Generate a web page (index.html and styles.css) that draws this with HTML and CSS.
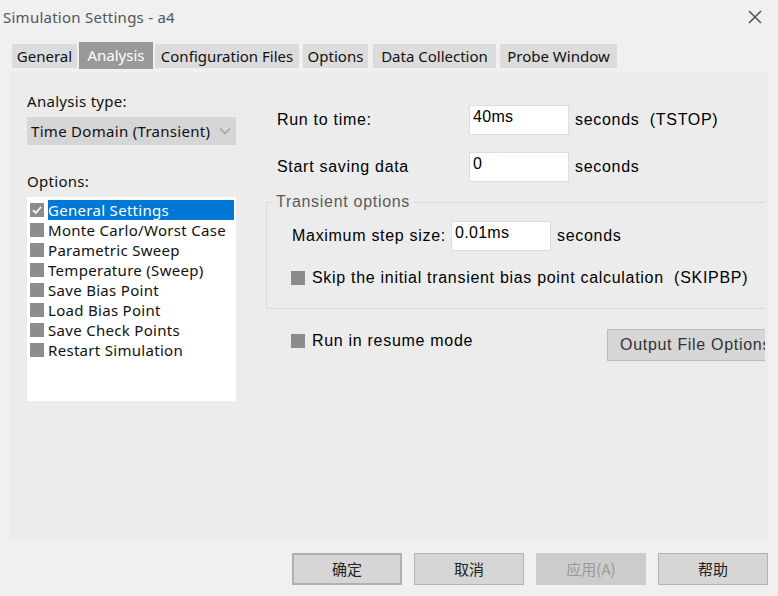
FILE: index.html
```html
<!DOCTYPE html>
<html>
<head>
<meta charset="utf-8">
<link rel="stylesheet" href="styles.css">
</head>
<body>
<div class="window">
  <div class="titlebar">
    <span class="title">Simulation Settings - a4</span>
    <svg class="close" width="14" height="14" viewBox="0 0 14 14"><path d="M1 1L13 13M13 1L1 13" stroke="#555" stroke-width="1.6" fill="none"/></svg>
  </div>
  <div class="tabs">
    <div class="tab t-general">General</div>
    <div class="tab active t-analysis">Analysis</div>
    <div class="tab t-config">Configuration Files</div>
    <div class="tab t-options">Options</div>
    <div class="tab t-data">Data Collection</div>
    <div class="tab t-probe">Probe Window</div>
  </div>
  <div class="panel">
    <div class="leftcol">
      <div class="lbl first">Analysis type:</div>
      <div class="select">
        <span>Time Domain (Transient)</span>
        <svg width="12" height="8" viewBox="0 0 12 8"><path d="M1 1.5L6 6.5L11 1.5" stroke="#a0a0a0" stroke-width="1.3" fill="none"/></svg>
      </div>
      <div class="lbl options">Options:</div>
      <div class="listbox">
        <div class="item sel"><span class="cb checked"><svg width="14" height="14" viewBox="0 0 14 14"><path d="M3 7.2L5.8 10L11 4" stroke="#fff" stroke-width="1.8" fill="none"/></svg></span><span class="itext">General Settings</span></div>
        <div class="item"><span class="cb"></span><span class="itext">Monte Carlo/Worst Case</span></div>
        <div class="item"><span class="cb"></span><span class="itext">Parametric Sweep</span></div>
        <div class="item"><span class="cb"></span><span class="itext">Temperature (Sweep)</span></div>
        <div class="item"><span class="cb"></span><span class="itext">Save Bias Point</span></div>
        <div class="item"><span class="cb"></span><span class="itext">Load Bias Point</span></div>
        <div class="item"><span class="cb"></span><span class="itext">Save Check Points</span></div>
        <div class="item"><span class="cb"></span><span class="itext">Restart Simulation</span></div>
      </div>
    </div>
    <div class="rightcol">
      <div class="row r1">
        <span class="rlabel">Run to time:</span>
        <div class="input">40ms</div>
        <span class="unit">seconds&nbsp; (TSTOP)</span>
      </div>
      <div class="row r2">
        <span class="rlabel">Start saving data</span>
        <div class="input">0</div>
        <span class="unit">seconds</span>
      </div>
      <div class="group">
        <div class="legend">Transient options</div>
        <div class="row r3">
          <span class="rlabel small">Maximum step size:</span>
          <div class="input">0.01ms</div>
          <span class="unit">seconds</span>
        </div>
        <div class="check r4">
          <span class="cb"></span>
          <span>Skip the initial transient bias point calculation&nbsp; (SKIPBP)</span>
        </div>
      </div>
      <div class="resume">
        <div class="check resume-check">
          <span class="cb"></span>
          <span>Run in resume mode</span>
        </div>
        <div class="outbtn">Output File Options</div>
      </div>
    </div>
  </div>
  <div class="footer">
    <div class="btn default">确定</div>
    <div class="btn">取消</div>
    <div class="btn disabled">应用(A)</div>
    <div class="btn">帮助</div>
  </div>
</div>
</body>
</html>
```
FILE: styles.css
```css
html, body {
  margin: 0;
  padding: 0;
  background: #f0f0f0;
}
.window {
  width: 778px;
  height: 596px;
  overflow: hidden;
  font-family: "Noto Sans", "Noto Sans CJK SC", sans-serif;
  font-size: 15px;
  color: #111;
}
.titlebar {
  height: 33px;
  display: flex;
  align-items: center;
  justify-content: space-between;
  padding: 0 16px 1px 3px;
}
.title {
  color: #555;
  font-size: 15px;
  letter-spacing: 0.25px;
}
.close {
  display: block;
}
.tabs {
  display: flex;
  align-items: flex-end;
  height: 36px;
  padding-left: 12px;
}
.tab {
  height: 24px;
  line-height: 25px;
  background: #dcdcdc;
  color: #111;
  margin-bottom: 2px;
  text-align: center;
  font-size: 15px;
}
.tab.active {
  background: #999999;
  color: #fff;
  height: 27px;
  line-height: 26px;
  margin-bottom: 1px;
}
.t-general { width: 65px; margin-right: 2px; }
.t-analysis { width: 74px; margin-right: 2px; }
.t-config { width: 144px; margin-right: 4px; }
.t-options { width: 65px; margin-right: 5px; }
.t-data { width: 123px; margin-right: 4px; }
.t-probe { width: 117px; }
.panel {
  margin: 2px 10px 0 10px;
  height: 468px;
  background: #ececec;
  display: flex;
  overflow: hidden;
}
.leftcol {
  width: 209px;
  padding-left: 17px;
  flex: none;
  letter-spacing: 0.3px;
}
.lbl {
  height: 20px;
  line-height: 20px;
}
.lbl.first {
  margin-top: 19px;
  margin-bottom: 6px;
}
.select {
  height: 28px;
  background: #d6d6d6;
  display: flex;
  align-items: center;
  justify-content: space-between;
  padding: 0 5px 0 4px;
}
.select svg { display: block; }
.lbl.options {
  margin-top: 26px;
  margin-bottom: 6px;
}
.listbox {
  height: 201px;
  background: #fff;
  padding-top: 3px;
}
.item {
  height: 20px;
  display: flex;
  align-items: center;
  line-height: 20px;
}
.item .cb {
  margin-left: 3px;
  margin-right: 4px;
}
.itext {
  padding-left: 0;
  flex: 1;
  margin-right: 2px;
}
.item.sel .itext {
  background: #0078d7;
  color: #fff;
}
.cb {
  width: 14px;
  height: 14px;
  background: #8c8c8c;
  flex: none;
  display: block;
}
.cb svg { display: block; }
.rightcol {
  margin-left: 30px;
  margin-right: 3px;
  flex: 1;
  overflow: hidden;
  font-family: "Liberation Sans", Arial, sans-serif;
  font-size: 16px;
  letter-spacing: 0.7px;
  color: #000;
  -webkit-font-smoothing: none;
}
.row {
  display: flex;
  align-items: center;
  height: 29px;
}
.r1 { margin-top: 33px; padding-left: 11px; }
.r2 { margin-top: 18px; padding-left: 11px; }
.rlabel {
  width: 192px;
  flex: none;
}
.rlabel.small {
  width: 159px;
}
.input {
  background: #fff;
  border: 1px solid #dddddd;
  line-height: 22px;
  padding-left: 3px;
  box-sizing: border-box;
  width: 100px;
  height: 30px;
  flex: none;
  letter-spacing: 0.3px;
}
.unit {
  margin-left: 6px;
}
.group {
  margin-top: 21px;
  height: 107px;
  border-top: 1px solid #d9d9d9;
  border-left: 1px solid #d9d9d9;
  border-bottom: 1px solid #d9d9d9;
  position: relative;
  box-sizing: border-box;
}
.legend {
  position: absolute;
  left: 6px;
  top: -11px;
  background: #ececec;
  padding: 0 3px;
  color: #5a5a5a;
  line-height: 20px;
}
.r3 {
  margin-top: 18px;
  padding-left: 25px;
}
.check {
  display: flex;
  align-items: center;
  gap: 7px;
  height: 20px;
}
.r4 {
  margin-top: 18px;
  padding-left: 24px;
}
.resume {
  display: flex;
  align-items: flex-start;
  margin-top: 22px;
  padding-left: 25px;
  height: 32px;
}
.resume-check {
  width: 316px;
  flex: none;
}
.outbtn {
  margin-top: -2px;
  height: 32px;
  width: 170px;
  flex: none;
  box-sizing: border-box;
  background: #d6d6d6;
  border: 1px solid #bcbcbc;
  color: #333;
  line-height: 30px;
  padding-left: 12px;
  white-space: nowrap;
  letter-spacing: 0.7px;
}
.footer {
  display: flex;
  justify-content: flex-end;
  gap: 12px;
  padding-right: 10px;
  margin-top: 13px;
}
.btn {
  width: 110px;
  height: 32px;
  box-sizing: border-box;
  background: #d6d6d6;
  border: 1px solid #b4b4b4;
  text-align: center;
  line-height: 30px;
  font-family: "Noto Sans CJK SC", sans-serif;
  font-size: 15px;
  color: #222;
}
.btn.default {
  border: 2px solid #b0b0b0;
  line-height: 28px;
}
.btn.disabled {
  background: #cccccc;
  border-color: #cccccc;
  color: #999;
}
```
